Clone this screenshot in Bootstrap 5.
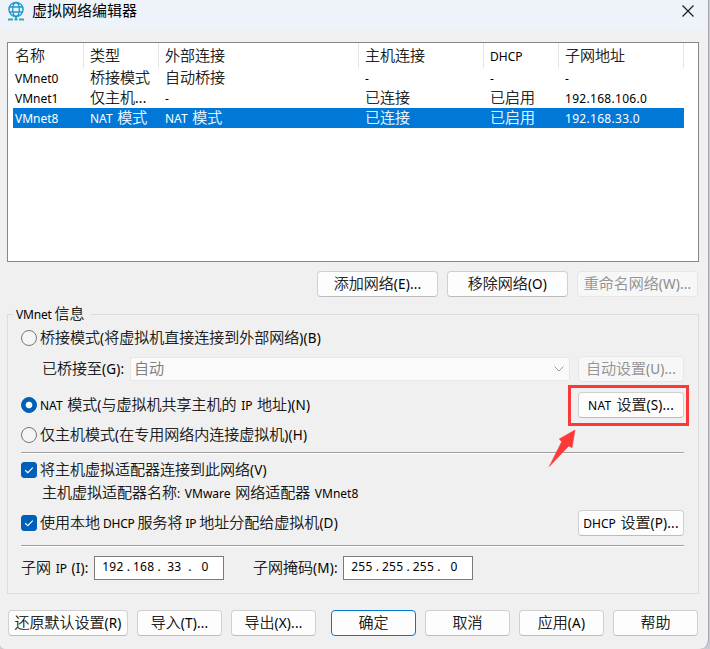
<!DOCTYPE html>
<html lang="zh-CN">
<head>
<meta charset="utf-8">
<title>虚拟网络编辑器</title>
<link rel="stylesheet" href="https://cdn.jsdelivr.net/npm/bootstrap@5.3.0/dist/css/bootstrap.min.css">
<style>
body{width:710px;height:649px;overflow:hidden;background:#c9ccd2;font:300 15px/20px "Noto Sans CJK SC",sans-serif;color:#000;-webkit-text-stroke:.2px}
.window-frame{width:709px;height:649px;background:#f0f0f0;border-right:1px solid #a5a7aa;border-bottom-right-radius:9px;border-bottom-left-radius:5px}
.titlebar{height:30px;background:#eef3fa;padding:0 13px 8px 7px}
.titlebar h1{font-size:15px;line-height:20px;font-weight:400;margin:0 0 0 7px;padding-bottom:2px;-webkit-text-stroke:0}
b{font:12px/16px "Noto Sans",sans-serif;white-space:pre;word-spacing:1.5px;-webkit-text-stroke:0}
b.k{font-size:13.5px;letter-spacing:.2px}
b.tight{word-spacing:0;letter-spacing:-.2px}
.ip{letter-spacing:.3px}
.net-list{margin:12px 0 0 7px;width:692px;height:220px;background:#fff;border:1px solid #828790;padding:0 14px 0 5px}
.net-row{height:20px;line-height:18px}
.net-head{height:25px;line-height:23px}
.net-row>div{padding-left:2px;width:75px;flex:none;white-space:nowrap}
.net-row>div:first-child{width:71px}
.net-row>div:not(:first-child){padding-left:6px}
.net-row>div:nth-child(3){width:200px}
.net-row>div:nth-child(4),.net-row>div:nth-child(6){width:125px}
.net-head>div{border-right:1px solid #e5e5e5}
.net-row.sel{background:#0078d7;color:#fff;width:671px}
.btn.wbtn{font:inherit;line-height:20px;height:26px;padding:1px 0 3px;border:1px solid #d0d0d0;border-bottom-color:#bcbcbc;border-radius:4px;background:#fdfdfd;color:#000;white-space:nowrap;flex:none}
.btn.wbtn:disabled{opacity:1;color:#898989;background:#f7f7f7;border-color:#e6e6e6}
.btn.wbtn.main{border-color:#0078d4}
.w121{width:121px}.w106{width:106px}.w85{width:85px}.w120{width:120px}
.group{margin:17px 0 0 7px;width:692px;height:280px;border:1px solid #dcdcdc;padding:0 14px 0 13px}
.group .cap{margin:-12px 0 0 -8px;padding:0 3px;background:#f0f0f0;width:78px;line-height:20px;height:21px;white-space:nowrap}
.line{height:26px;display:flex;align-items:center;white-space:nowrap}
.line>span,.combo>span{padding-bottom:2px}
.line>.subtext{padding-bottom:4px}
.form-check-input.fc{width:16px;height:16px;margin:0 3px 0 0;flex:none;border:1px solid #777;background-color:#f5f5f5}
.form-check-input.fc:checked{background-color:#005fb8;border-color:#005fb8}
.form-check-input.fc[type=checkbox]{border-radius:3px}
.form-check-input.fc[type=radio]:checked{background-image:radial-gradient(circle,#fff 2.8px,#005fb8 3.8px)}
.form-check-input.fc[type=checkbox]:checked{background-size:14px;background-image:url("data:image/svg+xml,%3Csvg xmlns='http://www.w3.org/2000/svg' viewBox='0 0 14 14'%3E%3Cpath d='M3.2 7.3l2.6 2.4 5-5' fill='none' stroke='white' stroke-width='1.2'/%3E%3C/svg%3E")}
.rule{height:2px;background:#a0a0a0;border-bottom:1px solid #fff}
.combo{width:440px;height:24px;background:#fafafa;border:1px solid #e7e7e7;color:#6d6d6d;padding:0 4px 0 3px}
.ipbox{width:130px;height:24px;background:#fff;border:1px solid #7a7a7a;padding:0 7px;font:12px/20px "Noto Sans",sans-serif;-webkit-text-stroke:0}
.ipbox span{width:22px;text-align:center;letter-spacing:.3px}
.ipbox i{width:9px;text-align:center;font-style:normal}
.hl{left:568px;top:385px;width:121px;height:41px;border:3px solid #fd3838}
.arrow{left:545px;top:425px}
</style>
<script src="https://cdn.jsdelivr.net/npm/bootstrap@5.3.0/dist/js/bootstrap.bundle.min.js"></script>
</head>
<body>
<div class="window-frame position-relative">
<header class="titlebar d-flex align-items-center">
<svg width="18" height="20" viewBox="0 0 18 20" fill="none"><circle cx="9" cy="8.500" r="7" fill="#e9f5fc" stroke="#2597cc" stroke-width="1.5"/><ellipse cx="9" cy="8.500" rx="3.3" ry="7" stroke="#2597cc" stroke-width="1.3"/><path d="M3 6h12M3 11h12" stroke="#2597cc" stroke-width="1.3"/><path d="M9 16v2M1 18.5h5M7.5 18.500h3M12 18.5h5" stroke="#35ab9b" stroke-width="2"/></svg>
<h1>虚拟网络编辑器</h1>
<svg class="ms-auto" width="14" height="14" viewBox="0 0 14 14"><path d="M1.5 1.5l11 11m0-11l-11 11" stroke="#222" stroke-width="1.3"/></svg>
</header>
<section class="net-list">
<div class="net-row net-head d-flex"><div>名称</div><div>类型</div><div>外部连接</div><div>主机连接</div><div><b>DHCP</b></div><div>子网地址</div></div>
<div class="net-row d-flex"><div><b>VMnet0</b></div><div>桥接模式</div><div>自动桥接</div><div><b>-</b></div><div><b>-</b></div><div><b>-</b></div></div>
<div class="net-row d-flex"><div><b>VMnet1</b></div><div>仅主机<b class="k">...</b></div><div><b>-</b></div><div>已连接</div><div>已启用</div><div><b class="ip">192.168.106.0</b></div></div>
<div class="net-row sel d-flex"><div><b>VMnet8</b></div><div><b>NAT </b>模式</div><div><b>NAT </b>模式</div><div>已连接</div><div>已启用</div><div><b class="ip">192.168.33.0</b></div></div>
</section>
<div class="d-flex justify-content-end" style="gap:9px;padding:9px 10px 0 0">
<button class="btn wbtn w121">添加网络<b class="k">(E)...</b></button><button class="btn wbtn w121">移除网络<b class="k">(O)</b></button><button class="btn wbtn w121" disabled>重命名网络<b class="k">(W)...</b></button>
</div>
<section class="group">
<div class="cap"><b class="tight">VMnet </b>信息</div>
<div class="line" style="margin-top:1px"><input class="form-check-input fc" type="radio" name="mode"><span>桥接模式<b class="k">(</b>将虚拟机直接连接到外部网络<b class="k">)(B)</b></span></div>
<div class="line" style="margin-top:5px"><span style="width:88px;margin-left:21px">已桥接至<b class="k">(G):</b></span><div class="combo d-flex align-items-center justify-content-between"><span>自动</span><svg width="12" height="8" viewBox="0 0 12 8"><path d="M1.500 1.500l4.500 4.500 4.500-4.500" fill="none" stroke="#999"/></svg></div><button class="btn wbtn w106 ms-auto" disabled>自动设置<b class="k">(U)...</b></button></div>
<div class="line" style="margin-top:10px"><input class="form-check-input fc" type="radio" name="mode" checked><span><b>NAT </b>模式<b class="k">(</b>与虚拟机共享主机的<b> IP </b>地址<b class="k">)(N)</b></span><button class="btn wbtn w106 ms-auto"><b class="ip">NAT </b>设置<b class="k">(S)...</b></button></div>
<div class="line" style="margin-top:4px"><input class="form-check-input fc" type="radio" name="mode"><span>仅主机模式<b class="k">(</b>在专用网络内连接虚拟机<b class="k">)(H)</b></span></div>
<div class="rule" style="margin-top:4px"></div>
<div class="line" style="margin-top:3px"><input class="form-check-input fc" type="checkbox" checked><span>将主机虚拟适配器连接到此网络<b class="k">(V)</b></span></div>
<div class="line" style="margin-top:-2px;padding-left:21px"><span class="subtext">主机虚拟适配器名称<b>: VMware </b>网络适配器<b> VMnet8</b></span></div>
<div class="line" style="margin-top:3px"><input class="form-check-input fc" type="checkbox" checked><span>使用本地<b class="tight"> DHCP </b>服务将<b class="tight"> IP </b>地址分配给虚拟机<b class="k">(D)</b></span><button class="btn wbtn w106 ms-auto"><b>DHCP </b>设置<b class="k">(P)...</b></button></div>
<div class="rule" style="margin-top:9px"></div>
<div class="line" style="margin-top:8px"><span style="width:73px">子网<b> IP </b><b class="k">(I):</b></span><div class="ipbox d-flex"><span>192</span><i>.</i><span>168</span><i>.</i><span>33</span><i>.</i><span>0</span></div><span style="width:90px;margin-left:29px">子网掩码<b class="k">(M):</b></span><div class="ipbox d-flex"><span>255</span><i>.</i><span>255</span><i>.</i><span>255</span><i>.</i><span>0</span></div></div>
</section>
<footer class="d-flex" style="padding:16px 0 0 8px;gap:9px">
<button class="btn wbtn w120">还原默认设置<b class="k">(R)</b></button><button class="btn wbtn w85">导入<b class="k">(T)...</b></button><button class="btn wbtn w85">导出<b class="k">(X)...</b></button><button class="btn wbtn w85 main" style="margin-left:6px">确定</button><button class="btn wbtn w85">取消</button><button class="btn wbtn w85">应用<b class="k">(A)</b></button><button class="btn wbtn w85">帮助</button>
</footer>
<div class="hl position-absolute"></div>
<svg class="arrow position-absolute" width="35" height="45" viewBox="0 0 35 45"><path d="M30 5L14.300 14l2.400 2.700L4.300 41.500 23.700 21l3.300 1.700z" fill="#fd3838" stroke="#fd3838" stroke-width=".6"/></svg>
</div>
</body>
</html>
